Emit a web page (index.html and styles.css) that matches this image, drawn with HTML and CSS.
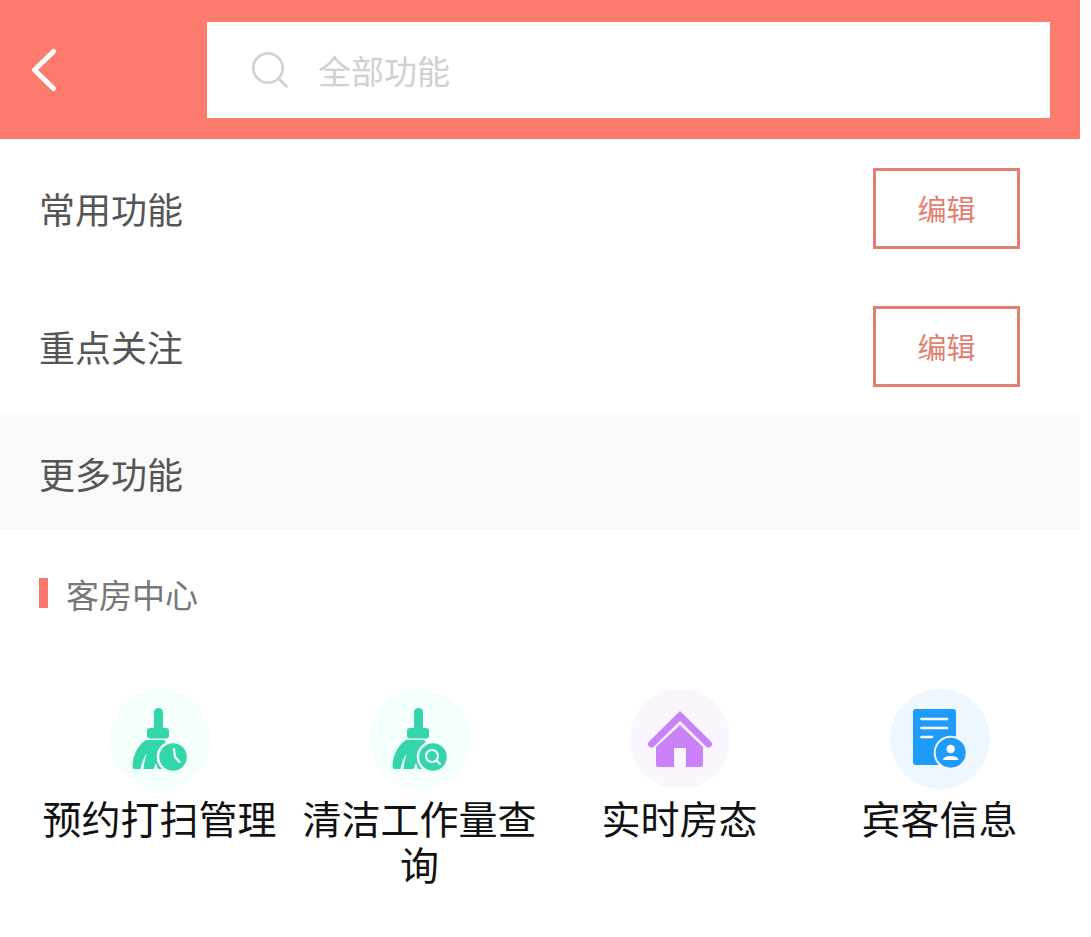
FILE: index.html
```html
<!DOCTYPE html>
<html lang="zh">
<head>
<meta charset="utf-8">
<title>全部功能</title>
<link rel="stylesheet" href="styles.css">
</head>
<body>
<header class="topbar">
  <div class="back">
    <svg width="30" height="46" viewBox="0 0 30 46"><path d="M23.5 4.5 L4.5 23 L23.5 41.5" fill="none" stroke="#fff" stroke-width="5" stroke-linecap="round" stroke-linejoin="round"/></svg>
  </div>
  <div class="search">
    <svg width="38" height="38" viewBox="0 0 38 38"><circle cx="16" cy="17" r="14.7" fill="none" stroke="#d2d2d2" stroke-width="2.7"/><path d="M27 28 L34.500 35.500" stroke="#d2d2d2" stroke-width="2.7" stroke-linecap="round"/></svg>
    <span class="search-text">全部功能</span>
  </div>
</header>
<section class="row">
  <span class="row-title">常用功能</span>
  <button class="edit">编辑</button>
</section>
<section class="row">
  <span class="row-title">重点关注</span>
  <button class="edit">编辑</button>
</section>
<section class="more"><span class="row-title">更多功能</span></section>
<section class="group">
  <i class="group-mark"></i><span class="group-title">客房中心</span>
</section>
<section class="grid">
  <div class="item">
    <div class="circle green">
      <svg width="58" height="64" viewBox="0 0 58 64"><rect x="23" y="1" width="9" height="24" rx="4.500" fill="#33d6aa"/><rect x="16" y="21" width="22" height="10.500" rx="3" fill="#33d6aa"/><path d="M15 33 H33 C37 37 39 50 38 62 H27 L25 56 L22.500 62 H12.500 C13 57 14 51 16 46.500 C13 50 10.500 56 9.500 62 H3.500 Q1.500 62 1.500 59 C2 48 7 38 15 33 Z" fill="#33d6aa"/><circle cx="42" cy="50" r="15" fill="#33d6aa" stroke="#f4fefb" stroke-width="2.500"/><path d="M43 42 L44 50 L48.500 55" fill="none" stroke="#f4fefb" stroke-width="2.200" stroke-linecap="round" stroke-linejoin="round"/></svg>
    </div>
    <div class="label">预约打扫管理</div>
  </div>
  <div class="item">
    <div class="circle green">
      <svg width="58" height="64" viewBox="0 0 58 64"><rect x="23" y="1" width="9" height="24" rx="4.500" fill="#33d6aa"/><rect x="16" y="21" width="22" height="10.500" rx="3" fill="#33d6aa"/><path d="M15 33 H33 C37 37 39 50 38 62 H27 L25 56 L22.500 62 H12.500 C13 57 14 51 16 46.500 C13 50 10.500 56 9.500 62 H3.500 Q1.500 62 1.500 59 C2 48 7 38 15 33 Z" fill="#33d6aa"/><circle cx="42" cy="50" r="15" fill="#33d6aa" stroke="#f4fefb" stroke-width="2.500"/><circle cx="41" cy="49" r="6" fill="none" stroke="#f4fefb" stroke-width="2.200"/><path d="M45.500 53.500 L49 57" stroke="#f4fefb" stroke-width="2.200" stroke-linecap="round"/></svg>
    </div>
    <div class="label">清洁工作量查询</div>
  </div>
  <div class="item">
    <div class="circle purple">
      <svg width="68" height="60" viewBox="0 0 68 60"><path d="M5.500 35 L34 7 L62.500 35" fill="none" stroke="#cb82f8" stroke-width="7" stroke-linecap="round" stroke-linejoin="miter"/><path d="M10 38 L34 16 L57 38 V56 Q57 58 55 58 H40 V39 H28 V58 H12 Q10 58 10 56 Z" fill="#cb82f8"/></svg>
    </div>
    <div class="label">实时房态</div>
  </div>
  <div class="item">
    <div class="circle blue">
      <svg width="56" height="62" viewBox="0 0 56 62"><rect x="1" y="1" width="43" height="56" rx="3" fill="#1e9bfb"/><path d="M9.500 11 H35 M9.500 20 H35 M9.500 29 H20" stroke="#fff" stroke-width="2.600" stroke-linecap="round"/><circle cx="38.700" cy="44.700" r="16" fill="#1e9bfb" stroke="#f5faff" stroke-width="2"/><circle cx="38.700" cy="41" r="4.200" fill="#fff"/><path d="M31 52 C31.500 46.500 46 46.500 46.500 52 Z" fill="#fff"/></svg>
    </div>
    <div class="label">宾客信息</div>
  </div>
</section>
</body>
</html>
```

FILE: styles.css
```css
* { box-sizing: border-box; }
html, body { margin: 0; padding: 0; background: #fff; }
body { width: 1080px; min-height: 937px; font-family: "Noto Sans CJK SC", "Liberation Sans", sans-serif; overflow: hidden; }
.topbar { height: 139px; background: #fd7b6d; display: flex; padding: 22px 30px 21px 0; }
.back { width: 207px; display: flex; align-items: center; padding-left: 30px; }
.search { flex: 1; background: #fff; display: flex; align-items: center; padding-left: 45px; }
.search-text { margin-left: 28px; font-size: 33px; line-height: 1; color: #d0d0d0; }
.row { display: flex; justify-content: space-between; align-items: center; height: 138px; padding: 0 60px 0 39px; }
.row-title { font-size: 36px; line-height: 1; color: #555; }
.edit { width: 147px; height: 81px; background: #fff; border: 3px solid #e27f72; color: #e27f72; font: inherit; font-size: 29px; padding: 0; border-radius: 0; }
.more { height: 115px; background: #f9f9f9; display: flex; align-items: center; padding-left: 39px; }
.group { display: flex; align-items: center; height: 125px; padding-left: 39px; }
.group-mark { width: 9px; height: 30px; background: #f9776c; margin-right: 18px; }
.group-title { font-size: 33px; line-height: 1; color: #777; margin-top: 4px; }
.grid { display: grid; grid-template-columns: repeat(4, 260px); padding: 34px 0 0 29.5px; }
.item { display: flex; flex-direction: column; align-items: center; }
.circle { width: 100px; height: 100px; border-radius: 50%; display: flex; align-items: center; justify-content: center; }
.green { background: #f4fefb; }
.purple { background: #fbf6fe; }
.blue { background: #eff7fe; }
.label { width: 240px; font-size: 39px; line-height: 46px; color: #111; text-align: center; margin-top: 5px; }
```
